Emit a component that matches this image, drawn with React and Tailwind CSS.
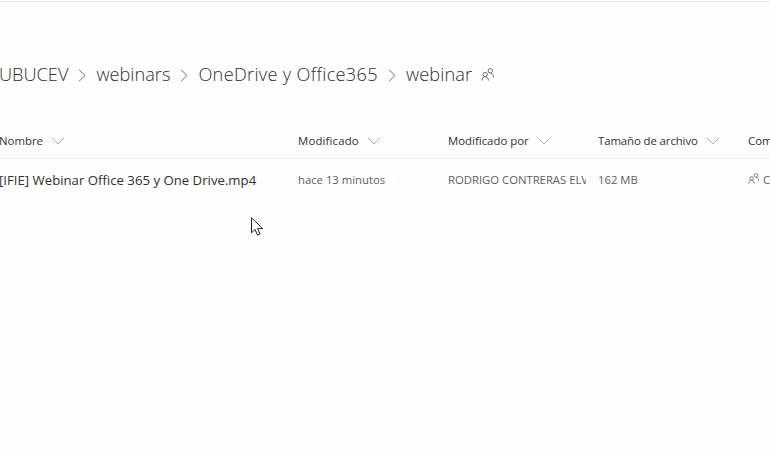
const C = () => (
  <svg width="14" height="8" viewBox="0 0 14 8" className="ml-[8px] shrink-0" fill="none" stroke="#b3b3b3" strokeWidth="1"><path d="M1 1l6 6 6-6" /></svg>
);
const Sep = () => (
  <svg width="8" height="13" viewBox="0 0 8 13" className="shrink-0" fill="none" stroke="#707070" strokeWidth="1"><path d="M1 .7l6 5.8-6 5.8" /></svg>
);
const People = ({ s = 14, c = "#605e5c" }) => (
  <svg width={s} height={s} viewBox="0 0 14 14" fill="none" stroke={c} strokeWidth="1" className="shrink-0">
    <circle cx="4.5" cy="7" r="2.3" /><path d="M1 13.5c0-2.400 1.200-4.200 3.500-4.200S8 11.100 8 13.500" />
    <circle cx="10" cy="3" r="2.400" /><path d="M10.500 5.400c1.800.4 3 2 3 4.600" />
  </svg>
);
const Head = ({ w, children, chevron = true }) => (
  <div className={`${w} flex items-center shrink-0 whitespace-nowrap overflow-hidden`}>
    <span>{children}</span>
    {chevron && <C />}
  </div>
);
export default function App() {
  return (
    <div className="relative w-[770px] h-[451px] overflow-hidden bg-[#fdfefd] text-[#323130]" style={{ fontFamily: '"Open Sans", "Noto Sans", sans-serif' }}>
      <div className="h-[2px] border-t border-[#e3e5e1] mt-[1px]" />
      <div className="mt-[54px] h-[36px] flex items-center gap-[10px] -ml-[1px] text-[18.2px] font-light text-[#323130] whitespace-nowrap">
        <span>UBUCEV</span><Sep />
        <span>webinars</span><Sep />
        <span className="tracking-[0.3px]">OneDrive y Office365</span><Sep />
        <span className="tracking-[0.1px]">webinar</span>
        <span className="-ml-[1px] -mt-[1px]"><People s={13} /></span>
      </div>
      <div className="flex items-center h-[24px] mt-[36px] -ml-[1px] text-[11.4px] text-[#323130]">
        <Head w="w-[299px]">Nombre</Head>
        <Head w="w-[150px]"><span className="tracking-[0.15px]">Modificado</span></Head>
        <Head w="w-[150px]">Modificado por</Head>
        <Head w="w-[150px]"><span className="-tracking-[0.1px]">Tamaño de archivo</span></Head>
        <Head w="w-[40px]" chevron={false}>Compartir</Head>
      </div>
      <div className="h-px bg-[#edebe9] mt-[5px]" />
      <div className="flex items-center h-[42px] -ml-[1px] text-[#605e5c] text-[11.3px]">
        <div className="w-[299px] shrink-0 whitespace-nowrap text-[13.2px] text-[#323130] pt-[1px]">[IFIE] Webinar Office 365 y One Drive.mp4</div>
        <div className="w-[150px] shrink-0 whitespace-nowrap">hace 13 minutos</div>
        <div className="w-[150px] shrink-0 whitespace-nowrap"><div className="w-[138px] overflow-hidden">RODRIGO CONTRERAS ELVIRA</div></div>
        <div className="w-[150px] shrink-0 whitespace-nowrap">162 MB</div>
        <div className="flex items-center gap-[4px] whitespace-nowrap"><span className="-mt-[4px]"><People s={11} /></span><span>Compartido</span></div>
      </div>
      <svg width="14" height="20" viewBox="0 0 14 20" className="absolute left-[251px] top-[217px]" fill="#fff" stroke="#222" strokeWidth="1">
        <path d="M.5.8v15l3.6-3.3 2.4 5.6 2.5-1-2.4-5.5h5.1z" />
      </svg>
    </div>
  );
}
